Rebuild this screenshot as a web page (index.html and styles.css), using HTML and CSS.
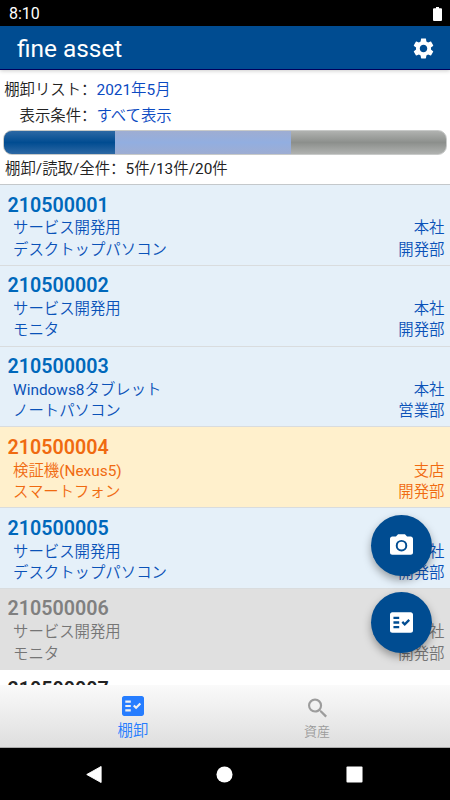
FILE: index.html
```html
<!DOCTYPE html>
<html lang="ja">
  <head>
    <meta charset="UTF-8" />
    <meta name="viewport" content="width=device-width, initial-scale=1.0" />
    <title>fine asset</title>
    <link rel="stylesheet" href="styles.css">
  </head>

  <body>
    <div class="statusBar">
      <span>8:10</span>
      <svg class="battery" viewBox="0 0 9 14"><path d="M3 0h3v1.2h2q1 0 1 1V13q0 1-1 1H1q-1 0-1-1V2.200q0-1 1-1h2z" /></svg>
    </div>

    <header class="appBar">
      <h1>fine asset</h1>
      <svg class="gear" viewBox="0 0 24 24"><path d="M19.140 12.940c.04-.3.060-.61.060-.94 0-.32-.02-.64-.07-.94l2.030-1.580c.18-.14.230-.41.120-.61l-1.920-3.320c-.12-.22-.37-.29-.59-.22l-2.390.96c-.5-.38-1.030-.7-1.620-.94l-.36-2.540c-.04-.24-.24-.41-.48-.41h-3.840c-.24 0-.43.17-.47.41l-.36 2.540c-.59.24-1.130.57-1.620.94l-2.390-.96c-.22-.08-.47 0-.59.22L2.740 8.870c-.12.21-.08.47.120.61l2.030 1.580c-.05.3-.09.630-.09.940s.02.640.070.940l-2.030 1.580c-.18.140-.23.410-.12.610l1.920 3.320c.120.220.370.290.590.220l2.390-.96c.5.380 1.030.7 1.620.940l.36 2.540c.050.240.240.410.480.410h3.840c.24 0 .44-.17.470-.41l.36-2.540c.59-.24 1.130-.56 1.620-.94l2.390.96c.22.080.47 0 .59-.22l1.920-3.320c.12-.22.070-.47-.12-.61l-2.010-1.580zM12 15.600c-1.980 0-3.600-1.620-3.600-3.600s1.620-3.600 3.600-3.600 3.600 1.620 3.600 3.600-1.620 3.600-3.600 3.600z" /></svg>
    </header>

    <section class="summary">
      <div class="condition"><span class="label">棚卸リスト<span class="colon" lang="zh-CN">：</span></span><span class="value"><b>2021</b>年<b>5</b>月</span></div>
      <div class="condition"><span class="label">表示条件<span class="colon" lang="zh-CN">：</span></span><span class="value">すべて表示</span></div>
      <div class="progress">
        <div class="done" style="width: 25%"></div>
        <div class="read" style="width: 40%"></div>
      </div>
      <div class="count">棚卸<b>/</b>読取<b>/</b>全件<span class="colon" lang="zh-CN">：</span><b>5</b>件<b>/13</b>件<b>/20</b>件</div>
    </section>

    <main class="list">
      <div class="item checked">
        <h2>210500001</h2>
        <p><span>サービス開発用</span><span>本社</span></p>
        <p><span>デスクトップパソコン</span><span>開発部</span></p>
      </div>
      <div class="item checked">
        <h2>210500002</h2>
        <p><span>サービス開発用</span><span>本社</span></p>
        <p><span>モニタ</span><span>開発部</span></p>
      </div>
      <div class="item checked">
        <h2>210500003</h2>
        <p><span><b>Windows8</b>タブレット</span><span>本社</span></p>
        <p><span>ノートパソコン</span><span>営業部</span></p>
      </div>
      <div class="item warning">
        <h2>210500004</h2>
        <p><span>検証機<b>(Nexus5)</b></span><span>支店</span></p>
        <p><span>スマートフォン</span><span>開発部</span></p>
      </div>
      <div class="item checked">
        <h2>210500005</h2>
        <p><span>サービス開発用</span><span>本社</span></p>
        <p><span>デスクトップパソコン</span><span>開発部</span></p>
      </div>
      <div class="item disabled">
        <h2>210500006</h2>
        <p><span>サービス開発用</span><span>本社</span></p>
        <p><span>モニタ</span><span>開発部</span></p>
      </div>
      <div class="item">
        <h2>210500007</h2>
      </div>
    </main>

    <div class="fabs">
      <button class="fab" aria-label="カメラ">
        <svg class="camera" viewBox="2 2 20 18"><path fill-rule="evenodd" d="M9 2 7.170 4H4c-1.100 0-2 .9-2 2v12c0 1.100.9 2 2 2h16c1.100 0 2-.9 2-2V6c0-1.100-.9-2-2-2h-3.170L15 2zm3 15a5 5 0 1 1 0-10 5 5 0 0 1 0 10zm0-1.700a3.300 3.300 0 1 0 0-6.600 3.300 3.300 0 0 0 0 6.600z" /></svg>
      </button>
      <button class="fab" aria-label="棚卸">
        <svg class="check" viewBox="2 3 20 18"><path fill-rule="evenodd" d="M20 3H4c-1.100 0-2 .9-2 2v14c0 1.100.9 2 2 2h16c1.100 0 2-.9 2-2V5c0-1.100-.9-2-2-2zM10 17H5v-2h5zm0-4H5v-2h5zm0-4H5V7h5zm4.820 6L12 12.160l1.410-1.410 1.410 1.420L17.990 9l1.420 1.420z" /></svg>
      </button>
    </div>

    <nav class="tabs">
      <div class="tab active">
        <svg class="tabCheck" viewBox="2 3 20 18"><path fill-rule="evenodd" d="M20 3H4c-1.100 0-2 .9-2 2v14c0 1.100.9 2 2 2h16c1.100 0 2-.9 2-2V5c0-1.100-.9-2-2-2zM10 17H5v-2h5zm0-4H5v-2h5zm0-4H5V7h5zm4.820 6L12 12.160l1.410-1.410 1.410 1.420L17.990 9l1.420 1.420z" /></svg>
        <span>棚卸</span>
      </div>
      <div class="tab">
        <svg class="search" viewBox="3 3 17.5 17.5"><path d="M15.500 14h-.79l-.28-.27A6.471 6.471 0 0 0 16 9.500 6.500 6.500 0 1 0 9.500 16c1.610 0 3.090-.59 4.230-1.570l.27.280v.790l5 4.990L20.490 19zm-6 0C7.010 14 5 11.990 5 9.500S7.010 5 9.500 5 14 7.010 14 9.500 11.990 14 9.500 14z" /></svg>
        <span>資産</span>
      </div>
    </nav>

    <div class="systemBar">
      <svg viewBox="0 0 18 18"><path d="M16 .5v17L.8 9z" stroke="#fff" stroke-linejoin="round" /></svg>
      <svg viewBox="0 0 18 18"><circle cx="9" cy="9" r="8.5" /></svg>
      <svg viewBox="0 0 18 18"><rect x=".5" y=".5" width="17" height="17" rx="1" /></svg>
    </div>
  </body>
</html>
```
FILE: styles.css
```css
* {
  box-sizing: border-box;
}

body {
  display: flex;
  flex-direction: column;
  height: 100vh;
  margin: 0;
  overflow: hidden;
  background-color: #fff;
  color: #222;
  font-family: Roboto, "Noto Sans CJK JP", sans-serif;
  font-size: 15.4px;
  font-weight: 350;
}

h1, h2, p {
  margin: 0;
}

/* latin text next to the thinner Japanese glyphs */
b {
  font-weight: 400;
}

svg {
  display: block;
  fill: currentColor;
}

.statusBar {
  display: flex;
  flex: none;
  align-items: center;
  justify-content: space-between;
  height: 26px;
  padding: 1px 8px 0 9px;
  background-color: #000;
  color: #fff;
  font-size: 16px;
  font-weight: 400;
}

.battery {
  width: 9px;
  height: 14px;
}

.appBar {
  display: flex;
  flex: none;
  align-items: center;
  justify-content: space-between;
  height: 44px;
  padding: 2px 14px 0 17px;
  border-bottom: 1px solid #00005c;
  background-color: #004c91;
  color: #fff;
  box-shadow: 0 1px 4px rgba(0, 0, 0, 0.2);
}

.appBar h1 {
  font-size: 24.4px;
  font-weight: 400;
}

.gear {
  width: 25px;
  height: 25px;
}

.summary {
  flex: none;
  height: 114px;
  padding: 7px 3px 0;
}

.condition {
  display: flex;
  height: 26px;
  line-height: 26px;
}

.condition .label {
  width: 93.5px;
  text-align: right;
}

.condition .value {
  color: #0b4ac2;
}

.colon {
  font-family: "Noto Sans CJK SC", sans-serif;
  line-height: 0;
}

.progress {
  display: flex;
  height: 25px;
  margin-top: 1px;
  overflow: hidden;
  border: 1px solid #c8cac9;
  border-radius: 9px;
  background: linear-gradient(#b0b2b0, #8c8f8c 50%, #b0b2b0);
}

.done {
  background: linear-gradient(#2d68a4, #004c91 50%, #2d68a4);
}

.read {
  background: linear-gradient(#9eadd2, #92aee0 50%, #9eadd2);
}

.count {
  padding-left: 2px;
  line-height: 29px;
}

.list {
  flex: 1;
  min-height: 0;
  overflow: hidden;
  border-top: 1px solid #c4c8cb;
}

.item {
  height: 80.8px;
  padding: 8px 5.5px 0 7.5px;
  border-bottom: 1px solid #d9dcde;
}

.item h2 {
  padding: 0.5px 0 0.9px;
  font-size: 19.7px;
  font-weight: 600;
  line-height: 24px;
}

.item p {
  display: flex;
  justify-content: space-between;
  padding-left: 5.5px;
  line-height: 21.3px;
}

.checked {
  background-color: #e5f0f9;
  color: #0a52b8;
}

.checked h2 {
  color: #0068bb;
}

.warning {
  background-color: #fff0cc;
  color: #f06a10;
}

.disabled {
  border-bottom-color: #e0e0e0;
  background-color: #e0e0e0;
  color: #757575;
}

.disabled h2 {
  color: #808080;
}

/* floating buttons over the list */
.fabs {
  position: absolute;
  right: 18px;
  bottom: 147px;
  display: grid;
  gap: 16px;
}

.fab {
  display: flex;
  align-items: center;
  justify-content: center;
  width: 61px;
  height: 61px;
  padding: 0;
  border: 0;
  border-radius: 50%;
  background-color: #004c91;
  color: #fff;
  box-shadow: 0 4px 8px rgba(0, 0, 0, 0.35);
}

.camera {
  width: 23px;
  height: 21px;
  margin-bottom: 2px;
}

.check {
  width: 23px;
  height: 21px;
}

.tabs {
  display: flex;
  flex: none;
  height: 63px;
  padding: 0 41px;
  border-bottom: 1px solid #aaa;
  background: linear-gradient(#fafafa, #dedede);
}

.tab {
  display: flex;
  flex: 1;
  flex-direction: column;
  align-items: center;
  padding-top: 11px;
  color: #9c9c9c;
  font-size: 13px;
  line-height: 30px;
}

.active {
  color: #267dff;
  font-size: 15.4px;
}

.tabCheck {
  width: 22px;
  height: 20px;
}

.search {
  width: 19px;
  height: 20px;
  margin-top: 2px;
  margin-bottom: -1px;
}

.systemBar {
  display: flex;
  flex: none;
  align-items: center;
  justify-content: space-between;
  height: 52px;
  padding: 0 87px 0 86px;
  background-color: #000;
  color: #fff;
}

.systemBar svg {
  width: 17px;
  height: 17px;
}
```
